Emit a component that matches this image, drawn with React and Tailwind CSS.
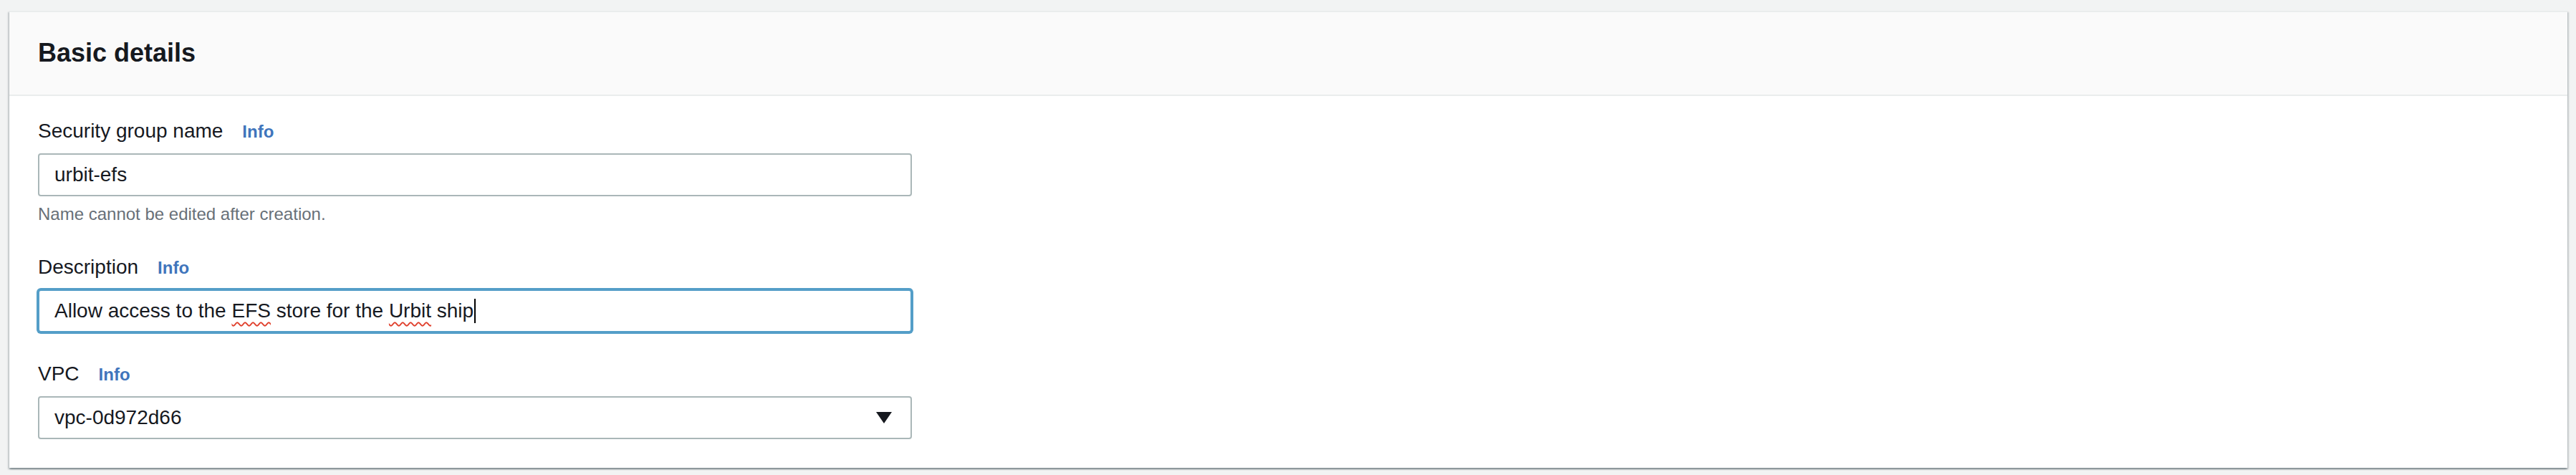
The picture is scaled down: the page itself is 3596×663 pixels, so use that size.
import React from 'react';

const font = { fontFamily: '"Liberation Sans", Arial, sans-serif' };

const InfoLink = () => (
    <a className="ml-[27px] text-[24px] font-bold text-[#3f75bc] leading-[40px]">Info</a>
);

const FieldLabel = ({ children }) => (
    <div className="flex items-baseline h-[40px] text-[28px] leading-[40px] text-[#16191f]">
        <span>{children}</span>
        <InfoLink />
    </div>
);

const Field = ({ label, children, hint }) => (
    <div>
        <FieldLabel>{label}</FieldLabel>
        <div className="mt-[11px]">{children}</div>
        {hint && (
            <p className="mt-[9px] text-[24px] leading-[32px] text-[#687078]">{hint}</p>
        )}
    </div>
);

const App = () => {
    return (
        <div style={font} className="min-h-[663px] bg-[#f2f3f3] pt-[15px] pl-[13px] pr-[12px]">
            <div className="bg-white border-t-2 border-[#eaeded] shadow-[0_2px_2px_0_rgba(0,28,36,0.3),2px_2px_2px_0_rgba(0,28,36,0.15),-2px_2px_2px_0_rgba(0,28,36,0.15)]">
                <div className="bg-[#fafafa] border-b-2 border-[#eaeded] px-10 pt-[35px] pb-[36px]">
                    <h2 className="text-[36px] leading-[44px] font-bold text-[#16191f]">Basic details</h2>
                </div>

                <div className="px-10 pt-[29px] pb-[40px] flex flex-col gap-[38px]">
                    <Field label="Security group name" hint="Name cannot be edited after creation.">
                        <div className="w-[1220px] h-[60px] flex items-center pl-[21px] border-2 border-[#aab7b8] rounded-[4px] bg-white text-[28px] text-[#16191f]">
                            urbit-efs
                        </div>
                    </Field>

                    <Field label="Description">
                        <div className="w-[1220px] h-[60px] flex items-center pl-[21px] border-2 border-[#549ec8] ring-2 ring-[#549ec8] rounded-[4px] bg-white text-[28px] text-[#16191f]">
                            <span className="whitespace-pre">
                                Allow access to the{' '}
                                <span className="underline decoration-wavy decoration-[#e0402c] decoration-2 underline-offset-[6px]">EFS</span>
                                {' '}store for the{' '}
                                <span className="underline decoration-wavy decoration-[#e0402c] decoration-2 underline-offset-[6px]">Urbit</span>
                                {' '}ship
                            </span>
                            <span className="inline-block w-[2px] h-[34px] bg-black ml-[1px]"></span>
                        </div>
                    </Field>

                    <Field label="VPC">
                        <div className="w-[1220px] h-[60px] flex items-center justify-between pl-[21px] pr-[26px] border-2 border-[#aab7b8] rounded-[4px] bg-white text-[28px] text-[#16191f]">
                            <span>vpc-0d972d66</span>
                            <svg width="22" height="16" viewBox="0 0 22 16">
                                <polygon points="0,0 22,0 11,16" fill="#16191f" />
                            </svg>
                        </div>
                    </Field>
                </div>
            </div>
        </div>
    );
};

export default App;
